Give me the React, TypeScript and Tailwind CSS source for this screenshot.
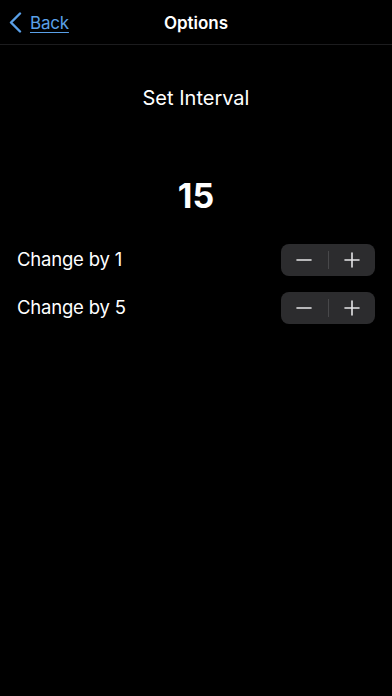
import React, { useState } from 'react';

const font = { fontFamily: 'Inter, "Liberation Sans", sans-serif' };

const Stepper: React.FC<{ onMinus: () => void; onPlus: () => void }> = ({ onMinus, onPlus }) => (
  <div className="flex items-center w-[94px] h-[32px] rounded-[8px] bg-[#2c2c2e]">
    <button onClick={onMinus} className="flex-1 h-full flex items-center justify-center">
      <svg width="16" height="16" viewBox="0 0 16 16">
        <path d="M1 8h14" stroke="#e5e5e7" strokeWidth="1.6" strokeLinecap="round" />
      </svg>
    </button>
    <div className="w-px h-[18px] bg-[#48484a]" />
    <button onClick={onPlus} className="flex-1 h-full flex items-center justify-center">
      <svg width="16" height="16" viewBox="0 0 16 16">
        <path d="M1 8h14M8 1v14" stroke="#e5e5e7" strokeWidth="1.6" strokeLinecap="round" />
      </svg>
    </button>
  </div>
);

export default function App() {
  const [value, setValue] = useState(15);

  return (
    <div className="w-[392px] h-[696px] bg-black text-white overflow-hidden" style={font}>
      {/* Nav bar */}
      <div className="relative flex items-center h-[45px] pt-[4px] border-b border-[#1c1c1e]">
        <button className="flex items-center pl-[9px] gap-[8px] text-[#5aa0e8]">
          <svg width="13" height="21" viewBox="0 0 13 21" className="-mt-[3px]">
            <path d="M11 1.5L2 10.5l9 9" stroke="#5aa0e8" strokeWidth="2.4" fill="none" strokeLinecap="round" strokeLinejoin="round" />
          </svg>
          <span className="text-[17px] tracking-[-0.2px] underline underline-offset-[3px]">Back</span>
        </button>
        <div className="absolute inset-x-0 text-center text-[17px] font-semibold pointer-events-none">Options</div>
      </div>

      <div className="flex flex-col items-center">
        <div className="mt-[38px] text-[20px]">Set Interval</div>
        <div className="mt-[63px] text-[34px] font-bold leading-[40px]">{value}</div>
      </div>

      <div className="mt-[28px] px-[17px] flex flex-col gap-[16px]">
        <div className="flex items-center justify-between">
          <span className="text-[18.5px] tracking-[-0.2px]">Change by 1</span>
          <Stepper onMinus={() => setValue(v => v - 1)} onPlus={() => setValue(v => v + 1)} />
        </div>
        <div className="flex items-center justify-between">
          <span className="text-[18.5px] tracking-[-0.2px]">Change by 5</span>
          <Stepper onMinus={() => setValue(v => v - 5)} onPlus={() => setValue(v => v + 5)} />
        </div>
      </div>
    </div>
  );
}
